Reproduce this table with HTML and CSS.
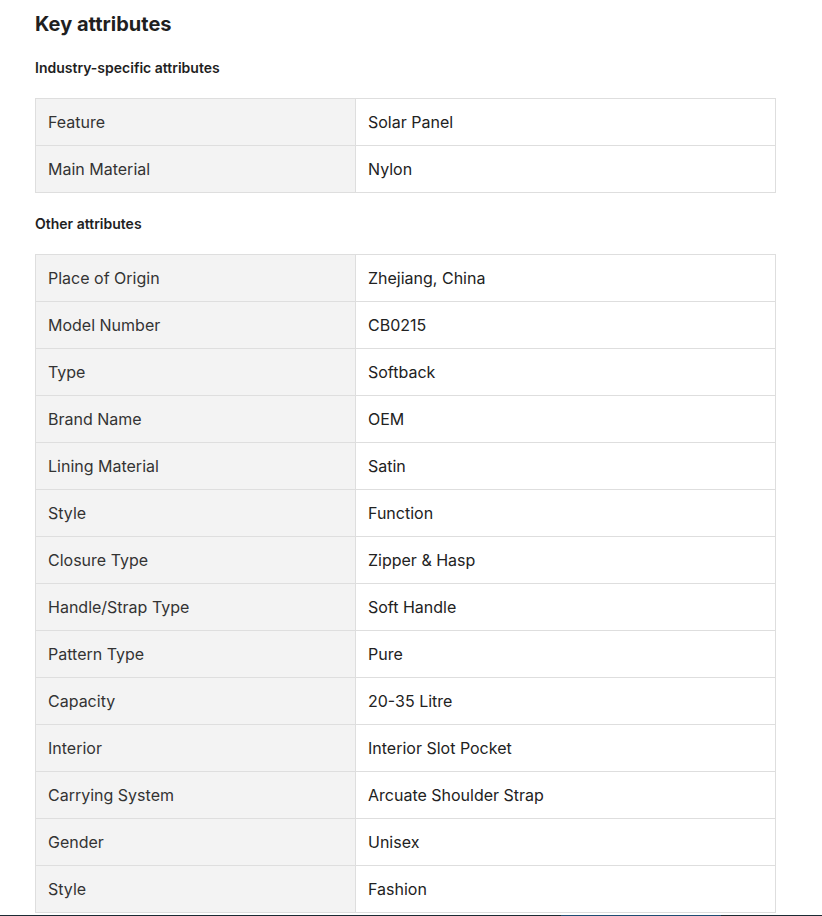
FILE: index.html
```html
<!DOCTYPE html>
<html lang="en">
<head>
<meta charset="utf-8">
<title>Key attributes</title>
<link rel="stylesheet" href="styles.css">
</head>
<body>
<main class="attrs">
  <h2 class="attrs-title">Key attributes</h2>
  <h3 class="attrs-sub">Industry-specific attributes</h3>
  <table class="attrs-table">
    <tr><td class="k">Feature</td><td class="v">Solar Panel</td></tr>
    <tr><td class="k">Main Material</td><td class="v">Nylon</td></tr>
  </table>
  <h3 class="attrs-sub attrs-sub-2">Other attributes</h3>
  <table class="attrs-table attrs-table-2">
    <tr><td class="k">Place of Origin</td><td class="v">Zhejiang, China</td></tr>
    <tr><td class="k">Model Number</td><td class="v">CB0215</td></tr>
    <tr><td class="k">Type</td><td class="v">Softback</td></tr>
    <tr><td class="k">Brand Name</td><td class="v">OEM</td></tr>
    <tr><td class="k">Lining Material</td><td class="v">Satin</td></tr>
    <tr><td class="k">Style</td><td class="v">Function</td></tr>
    <tr><td class="k">Closure Type</td><td class="v">Zipper &amp; Hasp</td></tr>
    <tr><td class="k">Handle/Strap Type</td><td class="v">Soft Handle</td></tr>
    <tr><td class="k">Pattern Type</td><td class="v">Pure</td></tr>
    <tr><td class="k">Capacity</td><td class="v">20-35 Litre</td></tr>
    <tr><td class="k">Interior</td><td class="v">Interior Slot Pocket</td></tr>
    <tr><td class="k">Carrying System</td><td class="v">Arcuate Shoulder Strap</td></tr>
    <tr><td class="k">Gender</td><td class="v">Unisex</td></tr>
    <tr><td class="k">Style</td><td class="v">Fashion</td></tr>
  </table>
</main>
<div class="edge"><span class="edge-a"></span><span class="edge-b"></span><span class="edge-c"></span></div>
</body>
</html>
```
FILE: styles.css
```css
html, body {
  margin: 0;
  padding: 0;
  background: #ffffff;
}
body {
  font-family: Inter, "Noto Sans", "Liberation Sans", sans-serif;
  color: #222222;
}
.attrs {
  padding: 12px 0 0 35px;
  width: 741px;
}
.attrs-title {
  margin: 0;
  font-size: 20px;
  line-height: 24px;
  font-weight: 700;
  color: #1f1f1f;
}
.attrs-sub {
  margin: 24px 0 0 0;
  font-size: 14px;
  line-height: 16px;
  font-weight: 600;
  color: #1f1f1f;
}
.attrs-sub-2 {
  margin-top: 23px;
}
.attrs-table {
  margin-top: 22px;
  width: 741px;
  border-collapse: collapse;
  table-layout: fixed;
  font-size: 16px;
}
.attrs-table-2 {
  margin-top: 22px;
}
.attrs-table td {
  border: 1px solid #dedede;
  height: 47px;
  padding: 0 12px;
  box-sizing: border-box;
  line-height: 20px;
  vertical-align: middle;
}
.attrs-table td.k {
  width: 320px;
  background: #f3f3f3;
  color: #333333;
}
.attrs-table td.v {
  background: #ffffff;
  color: #222222;
}
.edge {
  margin-top: 2px;
  height: 1px;
  display: flex;
}
.edge-a {
  width: 561px;
  background: #1b2a33;
}
.edge-b {
  width: 160px;
  background: #1f4d74;
}
.edge-c {
  flex: 1;
  background: #1b2a33;
}
```
